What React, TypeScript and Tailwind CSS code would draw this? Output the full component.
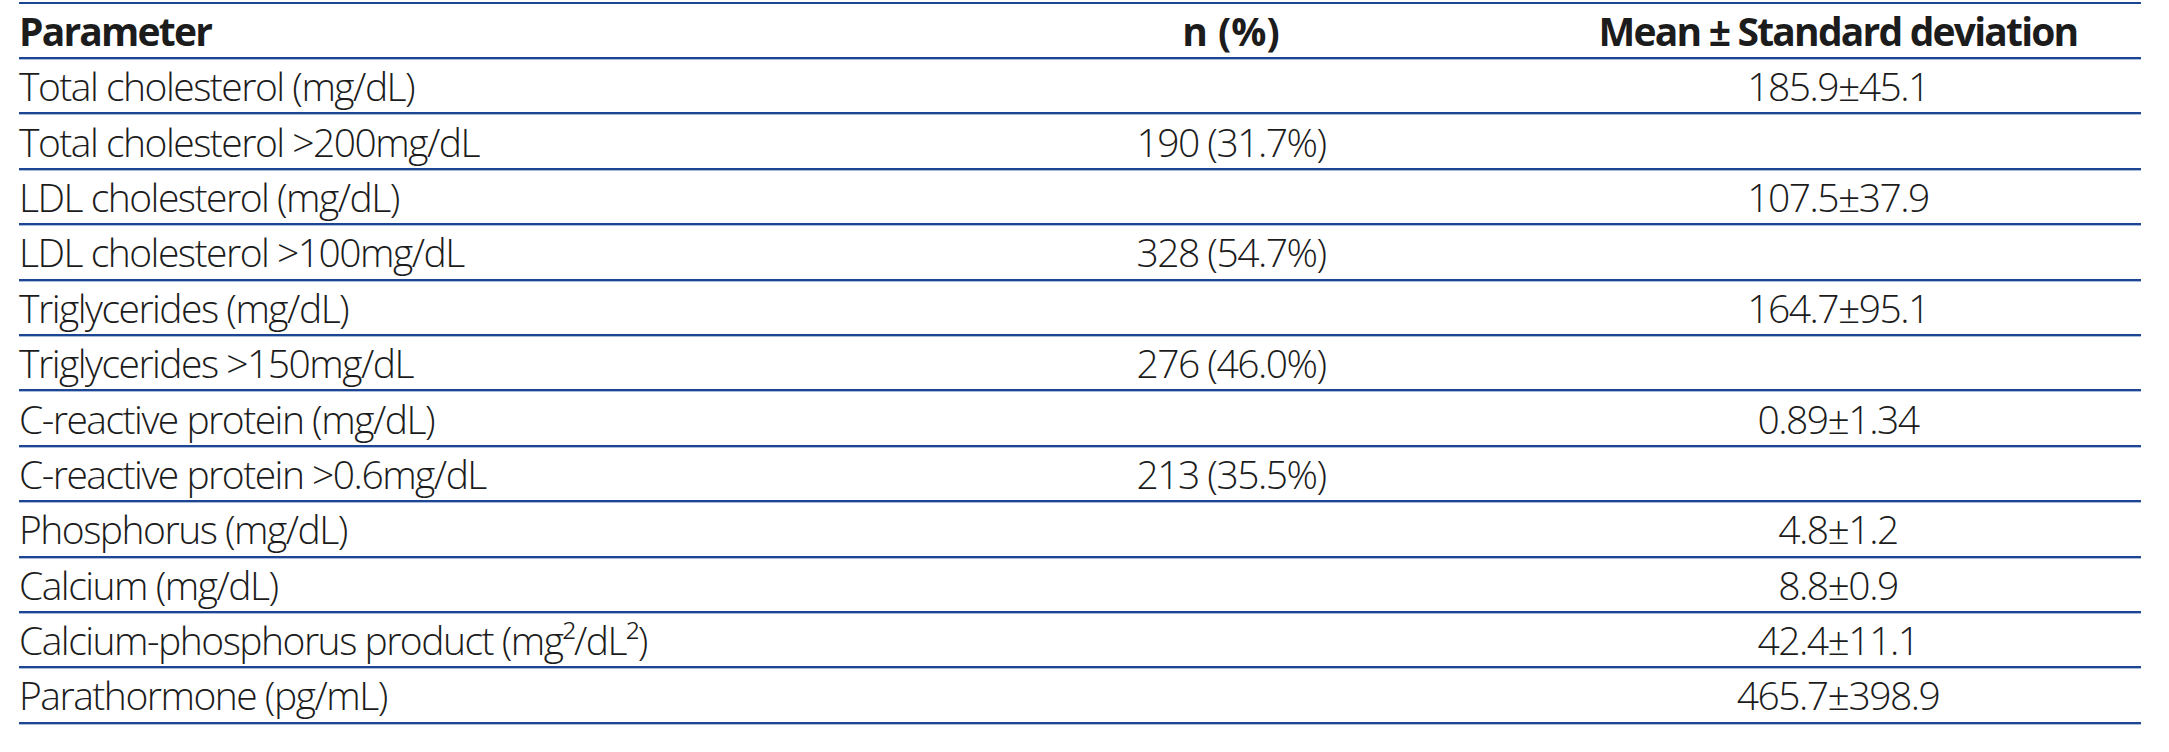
const rows: [string, string, string][] = [
  ['Total cholesterol (mg/dL)', '', '185.9±45.1'],
  ['Total cholesterol >200mg/dL', '190 (31.7%)', ''],
  ['LDL cholesterol (mg/dL)', '', '107.5±37.9'],
  ['LDL cholesterol >100mg/dL', '328 (54.7%)', ''],
  ['Triglycerides (mg/dL)', '', '164.7±95.1'],
  ['Triglycerides >150mg/dL', '276 (46.0%)', ''],
  ['C-reactive protein (mg/dL)', '', '0.89±1.34'],
  ['C-reactive protein >0.6mg/dL', '213 (35.5%)', ''],
  ['Phosphorus (mg/dL)', '', '4.8±1.2'],
  ['Calcium (mg/dL)', '', '8.8±0.9'],
  ['Calcium-phosphorus product (mg²/dL²)', '', '42.4±11.1'],
  ['Parathormone (pg/mL)', '', '465.7±398.9'],
]

const grid = 'grid grid-cols-[908px_608px_606px] items-center border-b-2 border-[#1d4692] shadow-[0_1px_0_#a9bbdf]'

export default function App() {
  return (
    <div className="min-h-[752px] bg-white pl-[19px] pt-[2px] font-['Open_Sans',sans-serif] text-[39px] text-[#1c1c1c]">
      <div className="w-[2122px] border-t-2 border-[#1d4692] shadow-[0_1px_0_#a9bbdf]">
        {/* header */}
        <div className={`${grid} h-[55px] font-bold leading-[53px] tracking-[-1.8px]`}>
          <div>Parameter</div>
          <div className="text-center tracking-normal">n (%)</div>
          <div className="text-center">Mean ± Standard deviation</div>
        </div>
        {rows.map(([label, n, mean]) => (
          <div key={label} className={`${grid} h-[55.4px] font-light leading-[53px] tracking-[-1.5px]`}>
            <div className="whitespace-nowrap">{label}</div>
            <div className="text-center">{n}</div>
            <div className="text-center">{mean}</div>
          </div>
        ))}
      </div>
    </div>
  )
}
